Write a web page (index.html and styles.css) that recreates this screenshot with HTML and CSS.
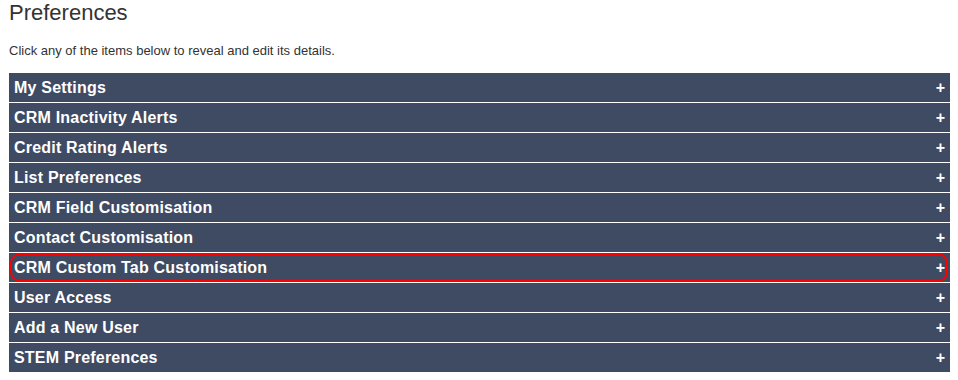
FILE: index.html
```html
<!DOCTYPE html>
<html>
<head>
<meta charset="utf-8">
<title>Preferences</title>
<link rel="stylesheet" href="styles.css">
</head>
<body>
<div class="page">
  <h1 class="title">Preferences</h1>
  <p class="intro">Click any of the items below to reveal and edit its details.</p>
  <ul class="list">
    <li class="item"><span class="label">My Settings</span><span class="plus">+</span></li>
    <li class="item"><span class="label">CRM Inactivity Alerts</span><span class="plus">+</span></li>
    <li class="item"><span class="label">Credit Rating Alerts</span><span class="plus">+</span></li>
    <li class="item"><span class="label">List Preferences</span><span class="plus">+</span></li>
    <li class="item"><span class="label">CRM Field Customisation</span><span class="plus">+</span></li>
    <li class="item"><span class="label">Contact Customisation</span><span class="plus">+</span></li>
    <li class="item highlighted"><span class="label">CRM Custom Tab Customisation</span><span class="plus">+</span><span class="ring"></span></li>
    <li class="item"><span class="label">User Access</span><span class="plus">+</span></li>
    <li class="item"><span class="label">Add a New User</span><span class="plus">+</span></li>
    <li class="item"><span class="label">STEM Preferences</span><span class="plus">+</span></li>
  </ul>
</div>
</body>
</html>
```
FILE: styles.css
```css
html, body {
  margin: 0;
  padding: 0;
  background: #ffffff;
}
body {
  font-family: "Liberation Sans", Arial, sans-serif;
  color: #333333;
}
.page {
  width: 941px;
  padding: 0 0 0 9px;
}
.title {
  margin: 0;
  font-size: 22px;
  line-height: 26px;
  font-weight: normal;
  color: #333333;
}
.intro {
  margin: 17px 0 15px 0;
  font-size: 13px;
  line-height: 15px;
  color: #333333;
}
.list {
  list-style: none;
  margin: 0;
  padding: 0;
  display: flex;
  flex-direction: column;
  gap: 1px;
}
.item {
  position: relative;
  display: flex;
  align-items: center;
  justify-content: space-between;
  box-sizing: border-box;
  height: 29px;
  padding: 1px 5px 0 5px;
  background: #3f4a63;
  color: #ffffff;
  font-weight: bold;
  font-size: 16px;
  line-height: 28px;
}
.label {
  letter-spacing: 0.2px;
}
.plus {
  font-size: 16px;
  font-weight: bold;
}
.ring {
  position: absolute;
  left: 1px;
  right: 2px;
  top: 0;
  bottom: 0;
  border: 2px solid #ff0000;
  border-radius: 10px;
  pointer-events: none;
}
```
